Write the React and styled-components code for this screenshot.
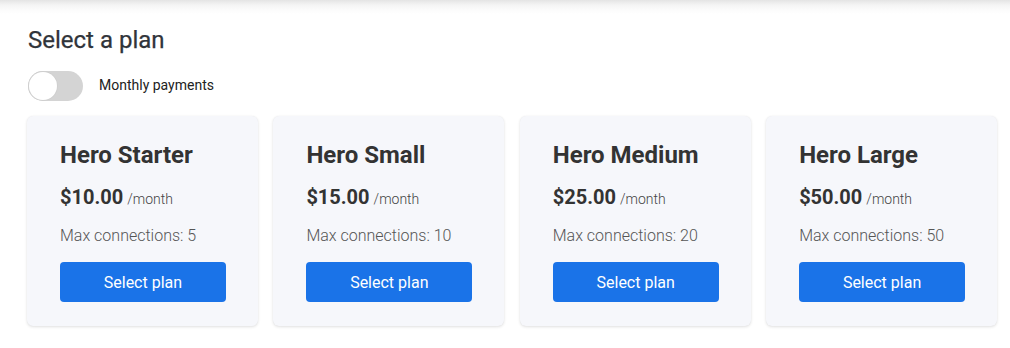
import React, { useState } from "react";
import styled, { createGlobalStyle } from "styled-components";

const GlobalStyle = createGlobalStyle`
  html, body { margin: 0; padding: 0; background: #ffffff; }
  body { font-family: Roboto, "Liberation Sans", Arial, sans-serif; color: #333; }
  * { box-sizing: border-box; }
`;

const TopShadow = styled.div`
  height: 14px;
  background: linear-gradient(to bottom, #e4e4e4 0%, #f4f4f4 35%, #fcfcfc 75%, #ffffff 100%);
`;

const Page = styled.main`
  padding: 12px 13px 20px 27px;
`;

const Heading = styled.h1`
  margin: 0 0 0 1px;
  font-size: 24px;
  line-height: 28.8px;
  font-weight: 400;
  color: #30343a;
  -webkit-text-stroke: 0.25px #30343a;
`;

const ToggleRow = styled.label`
  display: flex;
  align-items: center;
  gap: 16px;
  margin-top: 16px;
  margin-left: 1px;
  cursor: pointer;
`;

const Track = styled.span`
  position: relative;
  width: 55px;
  height: 30px;
  border-radius: 15px;
  background: ${(p) => (p.$on ? "#1a73e8" : "#d4d4d4")};
  flex-shrink: 0;
`;

const Thumb = styled.span`
  position: absolute;
  top: 1px;
  left: ${(p) => (p.$on ? "26px" : "1px")};
  width: 28px;
  height: 28px;
  border-radius: 50%;
  background: #fff;
  box-shadow: 0 0 0 1px #cfcfcf;
`;

const ToggleLabel = styled.span`
  font-size: 14px;
  color: #222;
  padding-bottom: 1px;
`;

const Grid = styled.div`
  display: grid;
  grid-template-columns: repeat(4, 1fr);
  gap: 15.5px;
  margin-top: 15px;
`;

const Card = styled.div`
  background: #f6f7fb;
  border-radius: 6px;
  box-shadow: 0 1px 3px rgba(0, 0, 0, 0.12), 0 0 1px rgba(0, 0, 0, 0.06);
  padding: 25px 32px 24px 33px;
`;

const PlanName = styled.h2`
  margin: 0;
  font-size: 24px;
  line-height: 28.8px;
  font-weight: 700;
  color: #333;
`;

const Price = styled.div`
  margin-top: 15px;
  line-height: 24px;
  color: #333;
`;

const Amount = styled.span`
  font-size: 20px;
  font-weight: 700;
`;

const Period = styled.span`
  font-size: 14px;
  font-weight: 300;
  color: #444;
  margin-left: 4px;
`;

const Connections = styled.div`
  margin-top: 15px;
  font-size: 16px;
  line-height: 20px;
  font-weight: 300;
  color: #555;
`;

const SelectButton = styled.button`
  display: block;
  width: 100%;
  height: 40px;
  margin-top: 16.5px;
  border: none;
  border-radius: 4px;
  background: #1a73e8;
  color: #fff;
  font-family: Roboto, "Liberation Sans", Arial, sans-serif;
  font-size: 16px;
  font-weight: 400;
  cursor: pointer;
`;

const plans = [
  { name: "Hero Starter", price: "$10.00", max: 5 },
  { name: "Hero Small", price: "$15.00", max: 10 },
  { name: "Hero Medium", price: "$25.00", max: 20 },
  { name: "Hero Large", price: "$50.00", max: 50 },
];

export default function App() {
  const [monthly, setMonthly] = useState(false);
  return (
    <>
      <GlobalStyle />
      <TopShadow />
      <Page>
        <Heading>Select a plan</Heading>
        <ToggleRow onClick={() => setMonthly((m) => !m)}>
          <Track $on={monthly}>
            <Thumb $on={monthly} />
          </Track>
          <ToggleLabel>Monthly payments</ToggleLabel>
        </ToggleRow>
        <Grid>
          {plans.map((p) => (
            <Card key={p.name}>
              <PlanName>{p.name}</PlanName>
              <Price>
                <Amount>{p.price}</Amount>
                <Period>/month</Period>
              </Price>
              <Connections>Max connections: {p.max}</Connections>
              <SelectButton>Select plan</SelectButton>
            </Card>
          ))}
        </Grid>
      </Page>
    </>
  );
}
